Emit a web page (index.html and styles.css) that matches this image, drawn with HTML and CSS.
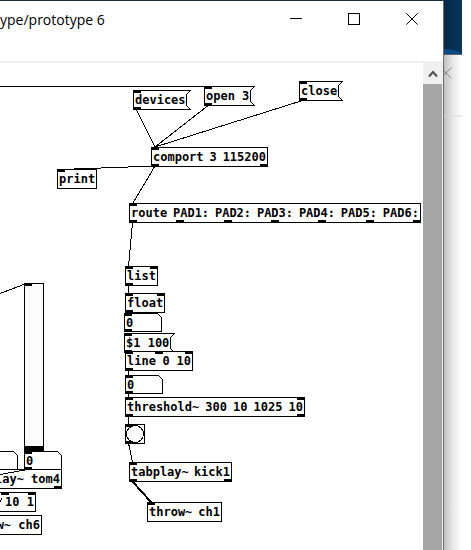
FILE: index.html
```html
<!DOCTYPE html>
<html lang="en">
<head>
<meta charset="utf-8">
<title>prototype 6</title>
<link rel="stylesheet" href="styles.css">
</head>
<body>
<div class="desktop">
  <main class="window">
    <header class="titlebar">
      <h1 class="title">ype/prototype 6</h1>
      <div class="controls">
        <button class="control" aria-label="Minimize"><svg width="12" height="12"><path d="M0 5.5H12"/></svg></button>
        <button class="control" aria-label="Maximize"><svg width="12" height="12"><path d="M.5 .5H11.5V11.5H.5Z"/></svg></button>
        <button class="control" aria-label="Close"><svg width="12" height="12"><path class="smooth" d="M.3 .3L11.7 11.7M11.7 .3L.3 11.7"/></svg></button>
      </div>
    </header>
    <div class="menubar"></div>
    <div class="content">
      <section class="patch" aria-label="Patch">
        <svg class="wires" width="423" height="487">
          <path d="M0 23.5H207M136.5 47L155 84M207.5 43L155 84M302.5 37.5L155 84M155 103L61 106.5M155 103L133 140M132.5 160L128.5 203M128.5 223V230M128.5 250V253M128.5 308V312M128.5 331V334M128.5 354V361M128.5 380L132.5 399M0 230.5L25 221"/>
          <path class="signal" d="M133 419L151 439"/>
        </svg>

        <button class="node message devices"><svg class="edge" width="58" height="20"><path d="M57.5 .5H.5V19.5H57.5L53.5 15.5V4.5Z"/></svg><i class="in"></i><i class="out"></i><span class="label">devices</span></button>
        <button class="node message open"><svg class="edge" width="51" height="20"><path d="M50.5 .5H.5V19.5H50.5L46.5 15.5V4.5Z"/></svg><i class="in"></i><i class="out"></i><span class="label">open 3</span></button>
        <button class="node message close"><svg class="edge" width="44" height="20"><path d="M43.5 .5H.5V19.5H43.5L39.5 15.5V4.5Z"/></svg><i class="in"></i><i class="out"></i><span class="label">close</span></button>

        <div class="node object comport"><i class="in"></i><i class="out"></i><i class="out end"></i><span>comport</span><span>3</span><span>115200</span></div>
        <div class="node object print"><i class="in"></i>print</div>
        <div class="node object route"><i class="in"></i>
          <span class="outlets"><b></b><b></b><b></b><b></b><b></b><b></b><b></b></span>
          <span>route</span><span>PAD1:</span><span>PAD2:</span><span>PAD3:</span><span>PAD4:</span><span>PAD5:</span><span>PAD6:</span></div>
        <div class="node object list"><i class="in"></i><i class="in end"></i><i class="out"></i>list</div>
        <div class="node object float"><i class="in"></i><i class="in end"></i><i class="out"></i>float</div>
        <div class="node number value-a"><svg class="edge" width="38" height="19"><path d="M.5 .5H33.5L37.5 4.5V18.5H.5Z"/></svg><i class="in"></i><i class="out"></i><input aria-label="Raw value" value="0"></div>
        <button class="node message ramp"><svg class="edge" width="51" height="20"><path d="M50.5 .5H.5V19.5H50.5L46.5 15.5V4.5Z"/></svg><i class="in"></i><i class="out"></i><span class="label">$1 100</span></button>
        <div class="node object line"><i class="in"></i><i class="in mid"></i><i class="in end"></i><i class="out"></i><span>line</span><span>0</span><span>10</span></div>
        <div class="node number value-b"><svg class="edge" width="38" height="19"><path d="M.5 .5H33.5L37.5 4.5V18.5H.5Z"/></svg><i class="in"></i><i class="out"></i><input aria-label="Smoothed value" value="0"></div>
        <div class="node object threshold"><i class="in"></i><i class="in end"></i><i class="out"></i><i class="out end"></i><span>threshold~</span><span>300</span><span>10</span><span>1025</span><span>10</span></div>
        <button class="node object bang" aria-label="Bang"><svg class="edge" width="18" height="18"><circle cx="9" cy="9" r="8.5"/></svg><i class="in"></i><i class="out"></i></button>
        <div class="node object kick"><i class="in"></i><i class="out"></i><i class="out end"></i><span>tabplay~</span><span>kick1</span></div>
        <div class="node object throw"><i class="in"></i><span>throw~</span><span>ch1</span></div>

        <div class="node object slider"><i class="in"></i><input type="range" aria-label="Level" min="0" max="127" value="0"></div>
        <div class="node number value-d"><svg class="edge" width="38" height="19"><path d="M.5 .5H33.5L37.5 4.5V18.5H.5Z"/></svg></div>
        <div class="node number value-c"><svg class="edge" width="38" height="19"><path d="M.5 .5H33.5L37.5 4.5V18.5H.5Z"/></svg><i class="in"></i><i class="out"></i><input aria-label="Level value" value="0"></div>
        <div class="node object cut tom"><i class="out end"></i>lay~ tom4</div>
        <div class="node object cut delay"><i class="in"></i><i class="in end"></i>10 1</div>
        <div class="node object cut send">w~ ch6</div>
        <svg class="wires" width="423" height="487"><path d="M0 411.5L25 407M0 439L2 435"/></svg>
      </section>
      <div class="scrollbar">
        <button class="arrow" aria-label="Scroll up"><svg width="10" height="8"><path d="M1 6.5L5 2L9 6.5"/></svg></button>
        <div class="thumb"></div>
      </div>
    </div>
  </main>
  <aside class="behind">
    <div class="wallpaper"></div>
    <div class="other-bar"><svg width="8" height="12"><path d="M7.5 .5L2 6L7.5 11.5M2 6L0 4M2 6L0 8"/></svg></div>
    <div class="other-body"></div>
  </aside>
</div>
</body>
</html>
```
FILE: styles.css
```css
* { box-sizing: border-box; }

body { margin: 0; background: #fff; overflow: hidden; }

button, input {
  margin: 0;
  padding: 0;
  border: 0;
  background: none;
  color: inherit;
  font: inherit;
}

svg { display: block; fill: none; stroke: #000; }

.desktop {
  display: flex;
  min-height: 100vh;
  padding-right: 9px;
}

.window {
  flex: 1;
  min-width: 0;
  display: flex;
  flex-direction: column;
  border-top: 1px solid #1b2a3e;
  border-right: 1px solid #6e6e6e;
  background: #fff;
}

.titlebar {
  display: flex;
  justify-content: space-between;
  height: 37px;
}

.title {
  margin: 0;
  font: 400 14px/37px "Open Sans", "Noto Sans", sans-serif;
  white-space: nowrap;
}

.controls { display: flex; padding-right: 2px; }

.control {
  display: grid;
  place-items: center;
  width: 58px;
  height: 36px;
}

.control path { shape-rendering: crispEdges; }
.control .smooth { shape-rendering: auto; }

.menubar { height: 25px; border-bottom: 2px solid #f0f0f0; }

.content { flex: 1; display: flex; }

.patch {
  position: relative;
  flex: 1;
  overflow: hidden;
  font: 700 12px/18px "DejaVu Sans Mono", monospace;
}

.wires { position: absolute; left: 0; top: 0; shape-rendering: crispEdges; }
.wires .signal { stroke-width: 2; }

.node {
  position: absolute;
  display: flex;
  align-items: flex-start;
  height: 20px;
  padding: 1px 2px;
  background: #fff;
  text-align: left;
  white-space: nowrap;
}

.object { justify-content: space-between; padding: 0 1px; border: 1px solid #000; }
.message, .number { background: none; }
.label { position: relative; }
.number { height: 19px; }
.number input { position: relative; width: 24px; height: 18px; }
.cut { left: 0; border-left: 0; justify-content: flex-end; }

.edge { position: absolute; left: 0; top: 0; fill: #fff; shape-rendering: crispEdges; }

/* Inlets and outlets */
.in, .out {
  position: absolute;
  left: 0;
  width: 8px;
  height: 3px;
  background: #000;
}
.in { top: 0; }
.out { bottom: 0; }
.object > .in, .object > .out { left: -1px; }
.object > .in { top: -1px; }
.object > .out { bottom: -1px; }
.object > .end { left: auto; right: -1px; }
.object > .mid { left: 29px; }

.outlets {
  position: absolute;
  left: -1px;
  right: -1px;
  bottom: -1px;
  display: flex;
  justify-content: space-between;
}
.outlets b { width: 8px; height: 3px; background: #000; }

/* Places on the patch canvas */
.devices { left: 133px; top: 27px; width: 58px; }
.open { left: 204px; top: 23px; width: 51px; }
.close { left: 299px; top: 18px; width: 44px; }
.comport { left: 151px; top: 84px; width: 117px; }
.print { left: 57px; top: 106px; width: 40px; }
.route { left: 129px; top: 140px; width: 292px; }
.list { left: 125px; top: 203px; width: 33px; }
.float { left: 125px; top: 230px; width: 40px; }
.value-a { left: 124px; top: 250px; width: 38px; }
.ramp { left: 124px; top: 270px; width: 51px; }
.line { left: 125px; top: 288px; width: 68px; }
.value-b { left: 125px; top: 312px; width: 38px; }
.threshold { left: 125px; top: 334px; width: 180px; }
.bang { left: 125px; top: 361px; width: 20px; }
.bang .edge { fill: #fcfcfc; }
.kick { left: 129px; top: 399px; width: 103px; }
.throw { left: 147px; top: 439px; width: 75px; }
.value-c { left: 24px; top: 388px; width: 38px; }
.value-d { left: -20px; top: 388px; width: 38px; }
.tom { top: 406px; width: 62px; }
.delay { top: 429px; width: 36px; }
.delay .in:first-child { left: 1px; }
.send { top: 452px; width: 42px; }

.slider { left: 24px; top: 220px; width: 20px; height: 169px; padding: 0; background: #fcfcfc; }
.slider input {
  appearance: none;
  width: 18px;
  height: 167px;
  writing-mode: vertical-lr;
  direction: rtl;
}
.slider input::-webkit-slider-runnable-track { width: 18px; height: 100%; }
.slider input::-webkit-slider-thumb {
  appearance: none;
  width: 18px;
  height: 5px;
  background: #000;
}

.scrollbar {
  display: flex;
  flex-direction: column;
  width: 20px;
  background: #f0f0f0;
}
.arrow { display: grid; place-items: center; height: 21px; }
.arrow svg { stroke: #505050; stroke-width: 2; }
.thumb { flex: 1; margin-right: 1px; background: #a6a6a6; }

.behind {
  display: flex;
  flex-direction: column;
  width: 18px;
  background: linear-gradient(90deg, #c0c0c0, #e2e2e2 40%, #f8f8f8 80%, #fff);
}
.wallpaper {
  height: 55px;
  border-bottom: 1px solid #56616c;
  background:
    radial-gradient(ellipse 18px 5px at 0 100%, #0b4a86 90%, transparent),
    linear-gradient(90deg, #052744, #07365f);
}
.other-bar { height: 62px; padding-top: 12px; border-bottom: 2px solid #d8d8d880; }
.other-bar svg { stroke: #8a8a8a; }
.other-body { flex: 1; }
```
